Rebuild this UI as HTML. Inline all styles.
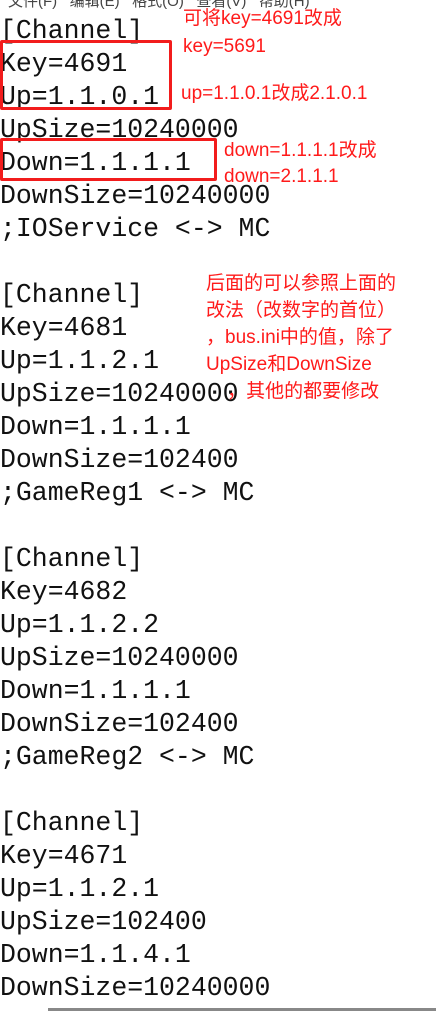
<!DOCTYPE html>
<html><head><meta charset="utf-8"><style>
html,body{margin:0;padding:0;background:#fff;width:436px;height:1011px;overflow:hidden;position:relative}
.menu{position:absolute;top:-10px;left:8px;font:15px "Liberation Sans","Noto Sans CJK SC",sans-serif;color:#444;white-space:pre}
.txt{position:absolute;left:0;top:15px;font:26.5px/33px "Liberation Mono","Noto Sans CJK SC",monospace;color:#111;white-space:pre;margin:0}
.box{position:absolute;border:3px solid #f21c1c;border-radius:2px}
.a{position:absolute;color:#ff1a1a;font:19px/27px "Liberation Sans","Noto Sans CJK SC",sans-serif;white-space:pre}
.bar{position:absolute;left:48px;top:1008px;width:388px;height:3px;background:#888}
</style></head><body>
<div class="menu">文件(F)   编辑(E)   格式(O)   查看(V)   帮助(H)</div>
<pre class="txt">[Channel]
Key=4691
Up=1.1.0.1
UpSize=10240000
Down=1.1.1.1
DownSize=10240000
;IOService &lt;-&gt; MC

[Channel]
Key=4681
Up=1.1.2.1
UpSize=10240000
Down=1.1.1.1
DownSize=102400
;GameReg1 &lt;-&gt; MC

[Channel]
Key=4682
Up=1.1.2.2
UpSize=10240000
Down=1.1.1.1
DownSize=102400
;GameReg2 &lt;-&gt; MC

[Channel]
Key=4671
Up=1.1.2.1
UpSize=102400
Down=1.1.4.1
DownSize=10240000</pre>
<div class="box" style="left:0;top:40px;width:166px;height:64px"></div>
<div class="box" style="left:0;top:138px;width:211px;height:37px"></div>
<div class="a" style="left:183px;top:5px">可将key=4691改成</div>
<div class="a" style="left:183px;top:33px">key=5691</div>
<div class="a" style="left:181px;top:80px">up=1.1.0.1改成2.1.0.1</div>
<div class="a" style="left:224px;top:137px">down=1.1.1.1改成</div>
<div class="a" style="left:224px;top:163px">down=2.1.1.1</div>
<div class="a" style="left:206px;top:270px">后面的可以参照上面的<br>改法（改数字的首位）<br>，bus.ini中的值，除了<br>UpSize和DownSize<br>    ，其他的都要修改</div>
<div class="bar"></div>
</body></html>
